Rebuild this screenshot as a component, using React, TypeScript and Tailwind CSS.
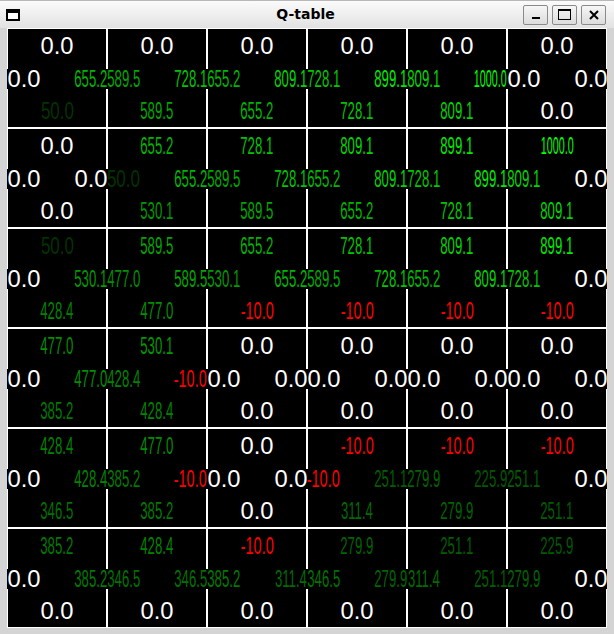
import React from "react";

// [top, left, right, bottom] for each cell, row by row
const Q: number[][][] = [
  [
    [0, 0, 655.2, 50],
    [0, 589.5, 728.1, 589.5],
    [0, 655.2, 809.1, 655.2],
    [0, 728.1, 899.1, 728.1],
    [0, 809.1, 1000, 809.1],
    [0, 0, 0, 0],
  ],
  [
    [0, 0, 0, 0],
    [655.2, 50, 655.2, 530.1],
    [728.1, 589.5, 728.1, 589.5],
    [809.1, 655.2, 809.1, 655.2],
    [899.1, 728.1, 899.1, 728.1],
    [1000, 809.1, 0, 809.1],
  ],
  [
    [50, 0, 530.1, 428.4],
    [589.5, 477, 589.5, 477],
    [655.2, 530.1, 655.2, -10],
    [728.1, 589.5, 728.1, -10],
    [809.1, 655.2, 809.1, -10],
    [899.1, 728.1, 0, -10],
  ],
  [
    [477, 0, 477, 385.2],
    [530.1, 428.4, -10, 428.4],
    [0, 0, 0, 0],
    [0, 0, 0, 0],
    [0, 0, 0, 0],
    [0, 0, 0, 0],
  ],
  [
    [428.4, 0, 428.4, 346.5],
    [477, 385.2, -10, 385.2],
    [0, 0, 0, 0],
    [-10, -10, 251.1, 311.4],
    [-10, 279.9, 225.9, 279.9],
    [-10, 251.1, 0, 251.1],
  ],
  [
    [385.2, 0, 385.2, 0],
    [428.4, 346.5, 346.5, 0],
    [-10, 385.2, 311.4, 0],
    [279.9, 346.5, 279.9, 0],
    [251.1, 311.4, 251.1, 0],
    [225.9, 279.9, 0, 0],
  ],
];

// advance widths of Liberation Sans, in em
const ADV: Record<string, number> = { ".": 0.278, "-": 0.333 };
const SIZE = 23;

function valueColor(v: number) {
  if (v === 0) return "#ffffff";
  if (v < 0) return "#ff0000";
  const g = Math.round(40 + (215 * Math.min(v, 1000)) / 1000);
  return `rgb(0, ${g}, 0)`;
}

function Val({ v }: { v: number }) {
  const s = v.toFixed(1);
  const natural = [...s].reduce((a, c) => a + (ADV[c] ?? 0.556), 0) * SIZE;
  return (
    <div className="w-[33px] h-[20px] bg-black flex items-center justify-center text-[23px] leading-[20px]">
      <span
        className="whitespace-nowrap"
        style={{ color: valueColor(v), transform: `scaleX(${33 / natural})` }}
      >
        {s}
      </span>
    </div>
  );
}

function Cell({ q }: { q: number[] }) {
  const [top, left, right, bottom] = q;
  return (
    <div className="bg-black flex flex-col items-center pt-[7px]">
      <Val v={top} />
      <div className="self-stretch -mx-px mt-[13px] flex justify-between">
        <Val v={left} />
        <Val v={right} />
      </div>
      <div className="mt-[12px]">
        <Val v={bottom} />
      </div>
    </div>
  );
}

function TitleBar() {
  return (
    <div className="h-[28px] flex items-center px-[6px] bg-gradient-to-b from-[#fbfbfb] to-[#e2e2e2] border-t border-[#b8b8b8]">
      {/* window icon */}
      <div className="w-[14px] h-[12px] border-2 border-t-[4px] border-black bg-white" />
      <div className="flex-1 text-center font-['DejaVu_Sans',sans-serif] font-bold text-[14px] text-black pl-[68px]">
        Q-table
      </div>
      <div className="flex gap-[4px] pr-[2px]">
        <button className="w-[25px] h-[20px] border border-[#8a8a8a] rounded-[2px] bg-gradient-to-b from-[#f6f6f6] to-[#dcdcdc] flex items-end justify-center pb-[5px]">
          <div className="w-[8px] h-[2px] bg-black" />
        </button>
        <button className="w-[25px] h-[20px] border border-[#8a8a8a] rounded-[2px] bg-gradient-to-b from-[#f6f6f6] to-[#dcdcdc] flex items-center justify-center">
          <div className="w-[13px] h-[11px] border border-t-[2px] border-black" />
        </button>
        <button className="w-[25px] h-[20px] border border-[#8a8a8a] rounded-[2px] bg-gradient-to-b from-[#f6f6f6] to-[#dcdcdc] flex items-center justify-center">
          <svg width="10" height="10" viewBox="0 0 10 10">
            <path d="M1 1 L9 9 M9 1 L1 9" stroke="black" strokeWidth="2" />
          </svg>
        </button>
      </div>
    </div>
  );
}

export default function App() {
  return (
    <div className="w-[614px] h-[634px] bg-[#d4d4d4] flex flex-col font-['Liberation_Sans',Arial,sans-serif]">
      <TitleBar />
      <div className="px-[7px]">
        <div className="w-[600px] h-[600px] bg-white p-px grid grid-cols-[repeat(6,98px)] grid-rows-[repeat(6,98px)] gap-[2px]">
          {Q.flatMap((row, r) => row.map((q, c) => <Cell key={`${r}-${c}`} q={q} />))}
        </div>
      </div>
    </div>
  );
}
